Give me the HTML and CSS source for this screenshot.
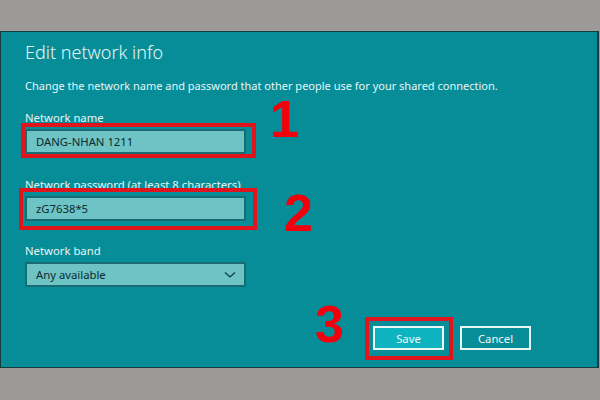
FILE: index.html
```html
<!DOCTYPE html>
<html lang="en">
<head>
    <meta charset='utf-8'>
    <meta name="viewport" content="width=device-width, initial-scale=1">
    <title>Edit network info</title>
    <link rel="stylesheet" href="styles.css">
</head>
<body>

<div class="panel">
    <h1 class="title">Edit network info</h1>
    <p class="desc">Change the network name and password that other people use for your shared connection.</p>

    <div class="field field-name">
        <label>Network name</label>
        <div class="box">
            <div class="input">DANG-NHAN 1211</div>
            <span class="mark"></span>
            <span class="num">1</span>
        </div>
    </div>

    <div class="field field-pass">
        <label>Network password (at least 8 characters)</label>
        <div class="box">
            <div class="input">zG7638*5</div>
            <span class="mark"></span>
            <span class="num">2</span>
        </div>
    </div>

    <div class="field field-band">
        <label>Network band</label>
        <div class="box">
            <div class="input select">
                <span>Any available</span>
                <svg width="12" height="8" viewBox="0 0 12 8"><path d="M1 1.5 L6 6 L11 1.5" fill="none" stroke="#0d3e42" stroke-width="1.3"/></svg>
            </div>
        </div>
    </div>

    <div class="actions">
        <div class="box">
            <button class="btn btn-save">Save</button>
            <span class="mark"></span>
            <span class="num">3</span>
        </div>
        <button class="btn btn-cancel">Cancel</button>
    </div>
</div>

</body>
</html>
```

FILE: styles.css
```css
body {
    margin: 0;
    padding-top: 31px;
    background: #9c9a98;
    font-family: "Noto Sans", "Open Sans", sans-serif;
}

.panel {
    box-sizing: border-box;
    width: 599px;
    height: 337px;
    background: #078d98;
    border: 1px solid #153c40;
    border-right-width: 2px;
    padding: 9px 0 0 24px;
    color: #e6f5f5;
}

.title {
    margin: 0;
    font-size: 18px;
    font-weight: 300;
    line-height: 22px;
}

.desc {
    margin: 15px 0 0;
    font-size: 11px;
    line-height: 16px;
}

.field label {
    display: block;
    font-size: 11.3px;
    line-height: 14px;
}

.field-name {
    margin-top: 17px;
}

.field-pass {
    margin-top: 24px;
}

.field-band {
    margin-top: 23px;
}

.field label + .box {
    margin-top: 4px;
}

.box {
    position: relative;
    width: 221px;
}

.input {
    box-sizing: border-box;
    height: 25px;
    padding: 0 8px 0 9px;
    background: #6ec3c5;
    border: 2px solid #176c72;
    color: #0c2b2e;
    font-size: 11.3px;
    line-height: 21px;
}

.select {
    display: flex;
    justify-content: space-between;
    align-items: center;
}

.mark {
    position: absolute;
    border: 4px solid #e1141c;
    pointer-events: none;
}

.num {
    position: absolute;
    color: #f2000c;
    font-family: "Liberation Sans", Arial, sans-serif;
    font-weight: bold;
    font-size: 52px;
    line-height: 1;
}

.field-name .mark {
    left: -4px;
    top: -6px;
    right: -10px;
    bottom: -4px;
}

.field-name .num {
    left: 245px;
    top: -36px;
}

.field-pass .mark {
    left: -6px;
    top: -8px;
    right: -11px;
    bottom: -9px;
}

.field-pass .num {
    left: 259px;
    top: -9px;
}

.actions {
    display: flex;
    gap: 16px;
    margin: 39px 0 0 348px;
}

.actions .box {
    width: auto;
}

.btn {
    display: block;
    box-sizing: border-box;
    width: 71px;
    height: 24px;
    border: 2px solid #e8f6f6;
    color: #eef8f8;
    font-family: "Noto Sans", "Open Sans", sans-serif;
    font-size: 11.3px;
    padding: 0;
}

.btn-save {
    background: #0db4c0;
}

.btn-cancel {
    background: transparent;
}

.actions .mark {
    left: -8px;
    top: -9px;
    right: -9px;
    bottom: -10px;
}

.actions .num {
    left: -58px;
    top: -28px;
}
```
